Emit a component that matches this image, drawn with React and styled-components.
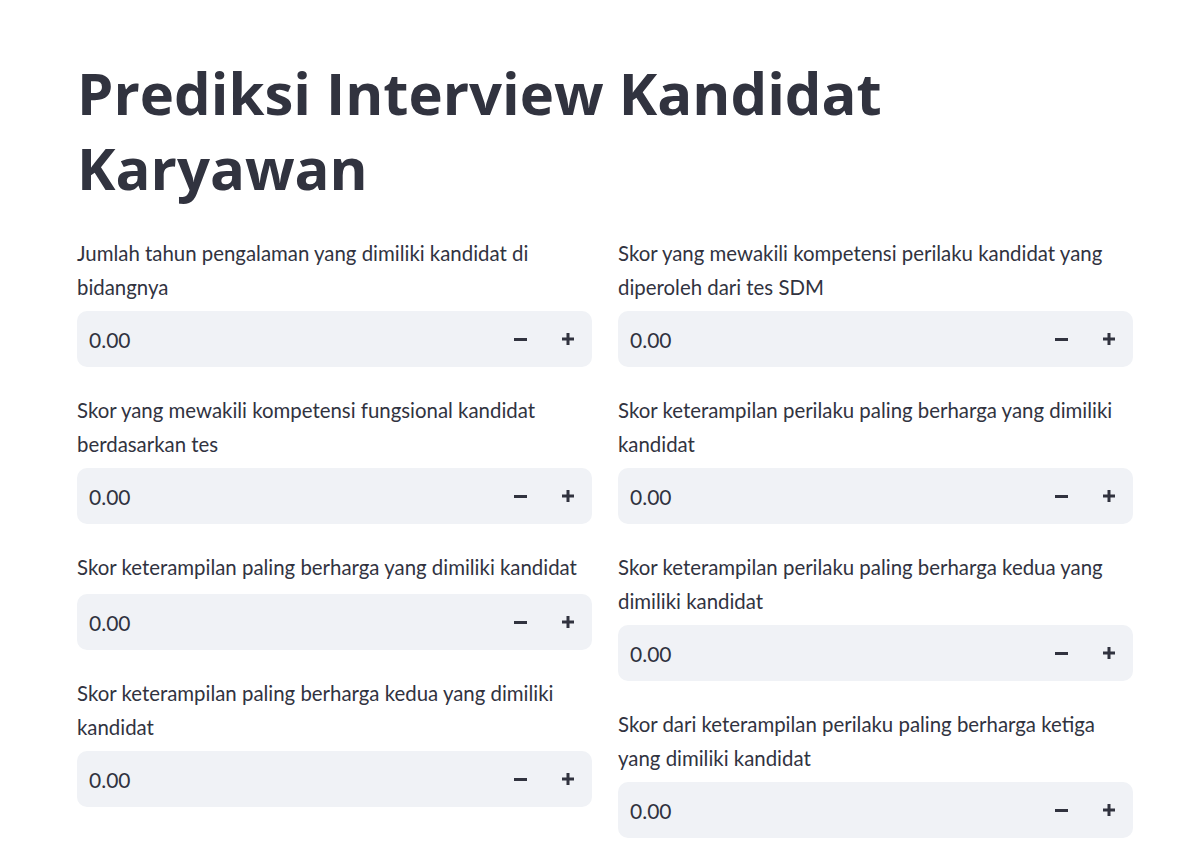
import React from "react";
import styled, { createGlobalStyle } from "styled-components";

const GlobalStyle = createGlobalStyle`
  html, body {
    margin: 0;
    padding: 0;
    background: #ffffff;
  }
  body {
    font-family: "Lato", "Open Sans", sans-serif;
    color: #31333f;
    -webkit-font-smoothing: antialiased;
  }
`;

const Main = styled.main`
  padding: 55px 62px 0 77px;
  box-sizing: border-box;
  width: 1195px;
`;

const Title = styled.h1`
  margin: 0 0 31px;
  font-family: "Open Sans", "Lato", sans-serif;
  font-weight: 700;
  font-size: 58px;
  line-height: 75px;
  color: #31333f;
  letter-spacing: 0;
`;

const Columns = styled.div`
  display: grid;
  grid-template-columns: 515px 515px;
  column-gap: 26px;
  align-items: start;
`;

const Column = styled.div`
  display: flex;
  flex-direction: column;
  gap: 26px;
`;

const Field = styled.div`
  display: flex;
  flex-direction: column;
`;

const Label = styled.label`
  display: block;
  min-height: 37px;
  margin-bottom: 7px;
  padding-right: 8px;
  font-family: "Lato", sans-serif;
  font-size: 20.4px;
  line-height: 34px;
  color: #31333f;
`;

const InputBox = styled.div`
  display: flex;
  align-items: center;
  height: 56px;
  border-radius: 10px;
  background: #f0f2f6;
  overflow: hidden;
`;

const Value = styled.input`
  flex: 1;
  min-width: 0;
  height: 100%;
  border: none;
  outline: none;
  background: transparent;
  padding: 0 0 0 12px;
  margin: 0;
  font-family: "Lato", sans-serif;
  font-size: 21px;
  color: #31333f;
`;

const StepButton = styled.button`
  display: flex;
  align-items: center;
  justify-content: center;
  width: 48px;
  height: 100%;
  padding: 0;
  margin: 0;
  border: none;
  background: transparent;
  color: #31333f;
  cursor: pointer;
`;

const MinusIcon = () => (
  <svg width="13" height="13" viewBox="0 0 13 13" aria-hidden="true">
    <rect x="0" y="5" width="13" height="3" fill="currentColor" />
  </svg>
);

const PlusIcon = () => (
  <svg width="12" height="12" viewBox="0 0 12 12" aria-hidden="true">
    <rect x="0" y="4.5" width="12" height="3" fill="currentColor" />
    <rect x="4.5" y="0" width="3" height="12" fill="currentColor" />
  </svg>
);

function NumberField({ label }) {
  return (
    <Field>
      <Label>{label}</Label>
      <InputBox>
        <Value type="text" defaultValue="0.00" readOnly />
        <StepButton type="button" aria-label="minus">
          <MinusIcon />
        </StepButton>
        <StepButton type="button" aria-label="plus">
          <PlusIcon />
        </StepButton>
      </InputBox>
    </Field>
  );
}

const leftFields = [
  "Jumlah tahun pengalaman yang dimiliki kandidat di bidangnya",
  "Skor yang mewakili kompetensi fungsional kandidat berdasarkan tes",
  "Skor keterampilan paling berharga yang dimiliki kandidat",
  "Skor keterampilan paling berharga kedua yang dimiliki kandidat",
];

const rightFields = [
  "Skor yang mewakili kompetensi perilaku kandidat yang diperoleh dari tes SDM",
  "Skor keterampilan perilaku paling berharga yang dimiliki kandidat",
  "Skor keterampilan perilaku paling berharga kedua yang dimiliki kandidat",
  "Skor dari keterampilan perilaku paling berharga ketiga yang dimiliki kandidat",
];

export default function App() {
  return (
    <>
      <GlobalStyle />
      <Main>
        <Title>Prediksi Interview Kandidat Karyawan</Title>
        <Columns>
          <Column>
            {leftFields.map((l) => (
              <NumberField key={l} label={l} />
            ))}
          </Column>
          <Column>
            {rightFields.map((l) => (
              <NumberField key={l} label={l} />
            ))}
          </Column>
        </Columns>
      </Main>
    </>
  );
}
